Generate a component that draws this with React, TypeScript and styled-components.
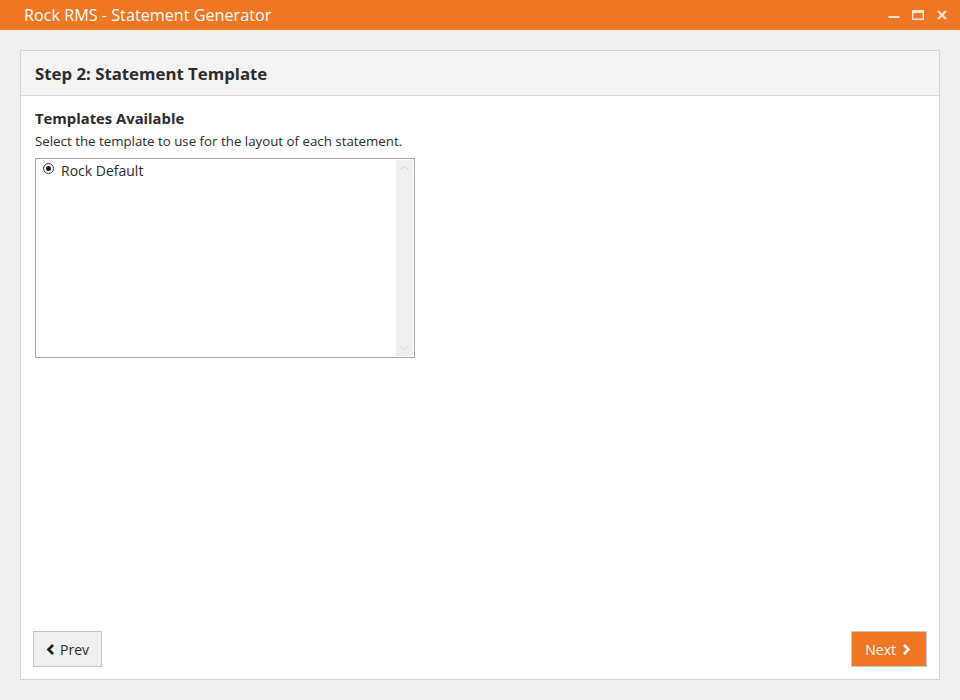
import React, { useState } from 'react';
import styled, { createGlobalStyle } from 'styled-components';

const GlobalStyle = createGlobalStyle`
  html, body {
    margin: 0;
    padding: 0;
    background: #efefef;
  }
  body {
    font-family: "Open Sans", "Noto Sans", sans-serif;
    color: #2b2b2b;
  }
`;

const Shell = styled.div`
  display: flex;
  flex-direction: column;
  width: 960px;
  height: 700px;
  background: #efefef;
`;

const TitleBar = styled.div`
  display: flex;
  align-items: center;
  justify-content: space-between;
  height: 30px;
  padding: 0 12px 0 24px;
  background: #ee7624;
  color: #fff;
  flex-shrink: 0;
`;

const Title = styled.div`
  font-size: 16.2px;
`;

const WindowControls = styled.div`
  display: flex;
  align-items: center;
  gap: 12px;
`;

const ControlButton = styled.div`
  width: 12px;
  height: 12px;
  display: flex;
  align-items: center;
  justify-content: center;
`;

const Main = styled.div`
  flex: 1;
  display: flex;
  padding: 20px;
  min-height: 0;
`;

const Panel = styled.div`
  flex: 1;
  display: flex;
  flex-direction: column;
  background: #fff;
  border: 1px solid #d3d3d3;
`;

const PanelHeader = styled.div`
  display: flex;
  align-items: center;
  height: 44px;
  padding: 0 14px;
  background: #f3f3f3;
  border-bottom: 1px solid #d8d8d8;
  font-size: 16.8px;
  font-weight: 700;
  color: #2b2b2b;
`;

const PanelBody = styled.div`
  flex: 1;
  display: flex;
  flex-direction: column;
  padding: 11px 14px 0;
`;

const SectionTitle = styled.div`
  font-size: 14.8px;
  font-weight: 700;
  line-height: 22px;
`;

const HelpText = styled.div`
  font-size: 13.3px;
  line-height: 20px;
  margin-top: 2px;
  color: #2b2b2b;
`;

const ListBox = styled.div`
  display: flex;
  width: 378px;
  height: 198px;
  margin-top: 7px;
  border: 1px solid #a9a9a9;
  background: #fff;
`;

const ListItems = styled.div`
  flex: 1;
  padding: 1px 7px;
`;

const ListItem = styled.label`
  display: flex;
  align-items: center;
  gap: 7px;
  height: 20px;
  font-size: 14px;
  cursor: default;
`;

const Radio = styled.span<{ $checked: boolean }>`
  width: 11px;
  height: 11px;
  border-radius: 50%;
  border: 1px solid #3a3a3a;
  box-sizing: border-box;
  display: flex;
  align-items: center;
  justify-content: center;
  margin-top: -3px;
  &::after {
    content: '';
    width: 5px;
    height: 5px;
    border-radius: 50%;
    background: ${p => (p.$checked ? '#1a1a1a' : 'transparent')};
  }
`;

const ScrollTrack = styled.div`
  width: 17px;
  margin: 1px 1px 1px 0;
  background: #f0f0f0;
  display: flex;
  flex-direction: column;
  justify-content: space-between;
  align-items: center;
  padding: 5px 0;
`;

const Footer = styled.div`
  display: flex;
  justify-content: space-between;
  align-items: center;
  padding: 0 12px 12px;
`;

const NavButton = styled.button<{ $primary?: boolean }>`
  display: flex;
  align-items: center;
  gap: ${p => (p.$primary ? '5px' : '4px')};
  height: 36px;
  padding: 0 ${p => (p.$primary ? '15px 0 13px' : '12px')};
  font-family: "Open Sans", "Noto Sans", sans-serif;
  font-size: 14px;
  border: 1px solid ${p => (p.$primary ? '#c9c9c9' : '#c4c4c4')};
  background: ${p => (p.$primary ? '#ee7624' : '#efefef')};
  color: ${p => (p.$primary ? '#fff' : '#2b2b2b')};
  cursor: pointer;
`;

const Chevron = ({ dir, color }: { dir: 'left' | 'right'; color: string }) => (
  <svg width="10" height="11" viewBox="0 0 10 11">
    <path
      d={dir === 'left' ? 'M7 1 L2.5 5.5 L7 10' : 'M3 1 L7.5 5.5 L3 10'}
      fill="none"
      stroke={color}
      strokeWidth="2.6"
    />
  </svg>
);

const ScrollArrow = ({ up }: { up: boolean }) => (
  <svg width="9" height="6" viewBox="0 0 9 6">
    <path d={up ? 'M0.5 5 L4.5 1 L8.5 5' : 'M0.5 1 L4.5 5 L8.5 1'} fill="none" stroke="#c8c8c8" strokeWidth="1" />
  </svg>
);

export default function App() {
  const [selected, setSelected] = useState('Rock Default');
  const templates = ['Rock Default'];

  return (
    <>
      <GlobalStyle />
      <Shell>
        <TitleBar>
          <Title>Rock RMS - Statement Generator</Title>
          <WindowControls>
            <ControlButton>
              <svg width="12" height="12" viewBox="0 0 12 12">
                <rect x="0.5" y="7" width="11" height="2" fill="#fbe2d0" />
              </svg>
            </ControlButton>
            <ControlButton>
              <svg width="12" height="12" viewBox="0 0 12 12">
                <rect x="0.75" y="1.75" width="10.5" height="8.5" fill="none" stroke="#fbe2d0" strokeWidth="1.5" />
                <rect x="0.5" y="1.5" width="11" height="2.5" fill="#fbe2d0" />
              </svg>
            </ControlButton>
            <ControlButton>
              <svg width="12" height="12" viewBox="0 0 12 12">
                <path d="M2 2 L10 10 M10 2 L2 10" stroke="#fbe2d0" strokeWidth="2.4" />
              </svg>
            </ControlButton>
          </WindowControls>
        </TitleBar>
        <Main>
          <Panel>
            <PanelHeader>Step 2: Statement Template</PanelHeader>
            <PanelBody>
              <SectionTitle>Templates Available</SectionTitle>
              <HelpText>Select the template to use for the layout of each statement.</HelpText>
              <ListBox>
                <ListItems>
                  {templates.map(t => (
                    <ListItem key={t} onClick={() => setSelected(t)}>
                      <Radio $checked={selected === t} />
                      {t}
                    </ListItem>
                  ))}
                </ListItems>
                <ScrollTrack>
                  <ScrollArrow up />
                  <ScrollArrow up={false} />
                </ScrollTrack>
              </ListBox>
            </PanelBody>
            <Footer>
              <NavButton>
                <Chevron dir="left" color="#1a1a1a" />
                Prev
              </NavButton>
              <NavButton $primary>
                Next
                <Chevron dir="right" color="#fff" />
              </NavButton>
            </Footer>
          </Panel>
        </Main>
      </Shell>
    </>
  );
}
